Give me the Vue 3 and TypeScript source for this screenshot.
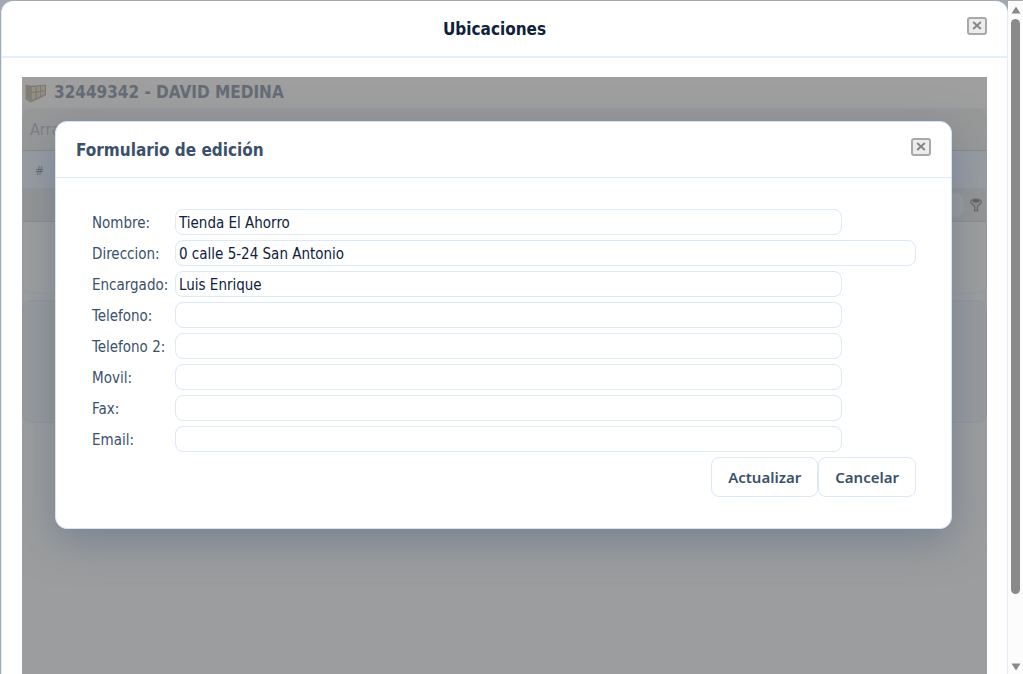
<script setup lang="ts">
import { reactive, ref } from 'vue'

interface Field {
  id: string
  label: string
  value: string
  wide?: boolean
}

const fields = reactive<Field[]>([
  { id: 'nombre', label: 'Nombre:', value: 'Tienda El Ahorro' },
  { id: 'direccion', label: 'Direccion:', value: '0 calle 5-24 San Antonio', wide: true },
  { id: 'encargado', label: 'Encargado:', value: 'Luis Enrique' },
  { id: 'telefono', label: 'Telefono:', value: '' },
  { id: 'telefono2', label: 'Telefono 2:', value: '' },
  { id: 'movil', label: 'Movil:', value: '' },
  { id: 'fax', label: 'Fax:', value: '' },
  { id: 'email', label: 'Email:', value: '' },
])
const filter = ref('')
</script>

<template>
  <div class="page">
    <main class="window">
      <header class="window-head">
        <h1>Ubicaciones</h1>
        <button class="close" type="button" aria-label="Cerrar">
          <svg viewBox="0 0 10 9" width="10" height="9"><path d="M1.2 1 8.8 8M8.8 1 1.2 8" /></svg>
        </button>
      </header>

      <div class="content">
        <section class="client">
          <h2>
            <svg class="boxes" viewBox="0 0 22 20" width="22" height="20">
              <path d="M1 2 10 2.800 20.500 2V12L6 19 1 16Z" fill="#8a877d" />
              <path d="M2 3.500 5 4V8.500L2 8ZM2 9.500 5 10.500V16.500L2 15Z" fill="#7f7c73" />
              <path d="M7 4.200 10.500 3.900V8.600L7 9ZM11.800 3.800 15 3.400V8L11.800 8.500ZM16.200 3.300 19.500 3V7L16.200 7.800ZM7 10.200 10.500 9.800V14.600L7 16.600ZM11.800 9.700 15 9.200V12.500L11.800 14.200ZM16.200 9 19.500 8.200V10.800L16.200 12Z" fill="#949082" />
              <path d="M1 2V16L6 19 20.500 12V2L6 3.600 1 2M6 3.600V19M1 8.500 6 9.600 20 7.600M11.200 3.500V16M15.600 3V14" fill="none" stroke="#7c7a73" />
            </svg>
            <span>32449342 - DAVID MEDINA</span>
          </h2>
          <div class="grid-card">
            <div class="group-hint">Arrastre</div>
            <div class="grid-head">#</div>
            <div class="grid-filter">
              <input v-model="filter" type="text" aria-label="Filtro" />
              <button class="filter" type="button" aria-label="Filtrar">
                <svg viewBox="0 0 12 14" width="12" height="14">
                  <path d="M1 2.500Q6 -.5 11 2.500V5L7.600 8.500V12.800H4.600V8.500L1 5Z" fill="#8b8b8b" stroke="#6c6c6c" stroke-width="1.300" />
                  <ellipse cx="6" cy="3" rx="3.400" ry="1.500" fill="#626262" />
                </svg>
              </button>
            </div>
            <div class="grid-body"></div>
          </div>
          <div class="detail-card"></div>

          <div class="overlay">
            <div class="dialog" role="dialog" aria-labelledby="dialog-title">
              <header class="dialog-head">
                <h3 id="dialog-title">Formulario de edición</h3>
                <button class="close" type="button" aria-label="Cerrar formulario">
                  <svg viewBox="0 0 10 9" width="10" height="9"><path d="M1.2 1 8.8 8M8.8 1 1.2 8" /></svg>
                </button>
              </header>
              <form class="form" @submit.prevent>
                <div v-for="field in fields" :key="field.id" class="row">
                  <label :for="field.id">{{ field.label }}</label>
                  <input :id="field.id" v-model="field.value" type="text" :class="{ wide: field.wide }" />
                </div>
                <div class="actions">
                  <button type="submit">Actualizar</button>
                  <button type="button">Cancelar</button>
                </div>
              </form>
            </div>
          </div>
        </section>
      </div>
    </main>

    <div class="scrollbar" aria-hidden="true">
      <svg viewBox="0 0 10 8" width="10" height="8"><path d="M5 .5 9.5 7.5H.5Z" /></svg>
      <div class="track"><div class="thumb"></div></div>
      <svg viewBox="0 0 10 8" width="10" height="8"><path d="M5 7.5 9.5 .5H.5Z" /></svg>
    </div>
  </div>
</template>

<style>
body {
  margin: 0;
}
</style>

<style scoped>
* {
  box-sizing: border-box;
}
.page {
  display: flex;
  height: 100vh;
  padding: 1px 0 0 1px;
  overflow: hidden;
  background: #a3a9b1;
  font-family: "DejaVu Sans Condensed", "Noto Sans", sans-serif;
  font-size: 15px;
  color: #3a506b;
}
h1,
h2,
h3 {
  margin: 0;
}
.window {
  display: flex;
  flex: 1;
  flex-direction: column;
  min-width: 0;
  border: 1px solid #e3edf8;
  border-width: 0 1px;
  border-radius: 12px 12px 0 0;
  background: #fff;
}
.window-head {
  display: flex;
  align-items: center;
  height: 57px;
  padding: 0 20px;
  border-bottom: 2px solid #e5eff9;
}
.window-head h1 {
  flex: 1;
  font-size: 17px;
  line-height: 24px;
  text-align: center;
  color: #10213c;
}
.close {
  display: flex;
  align-items: center;
  justify-content: center;
  width: 20px;
  height: 18px;
  padding: 0;
  border: 2px solid #a9a9a9;
  border-radius: 3px;
  background: #ececec;
}
.close path {
  fill: none;
  stroke: #858585;
  stroke-width: 2;
}
.window-head .close,
.dialog-head .close {
  margin-bottom: 6px;
}
.content {
  display: flex;
  flex: 1;
  min-height: 0;
  padding: 19px 20px 0;
}
.client {
  position: relative;
  flex: 1;
  overflow: hidden;
  background: #9c9d9e;
}
.client h2 {
  display: flex;
  gap: 7px;
  align-items: center;
  height: 31px;
  padding: 0 3px;
  background: #9f9f9f;
  font-size: 17px;
  line-height: 24px;
  color: #656c75;
}
.client h2 span {
  padding-bottom: 2px;
}
.grid-card {
  overflow: hidden;
  border: 1px solid #959ba2;
  border-radius: 10px;
  background: #9e9e9e;
}
.group-hint {
  height: 42px;
  padding: 0 7px;
  border-bottom: 1px solid #858a90;
  background: #989898;
  font-size: 16px;
  line-height: 42px;
  color: #7c7f83;
}
.grid-head {
  height: 38px;
  padding: 0 12px;
  border-bottom: 1px solid #9198a2;
  background: #989ca2;
  font-size: 12px;
  line-height: 40px;
  color: #62666c;
}
.grid-filter {
  display: flex;
  gap: 6px;
  align-items: center;
  justify-content: flex-end;
  height: 33px;
  padding: 0 4px;
  border-bottom: 1px solid #898c90;
  background: #959595;
}
.grid-filter input {
  width: 120px;
  height: 24px;
  border: 1px solid #959ca3;
  border-radius: 8px;
  background: #9d9d9d;
}
.filter {
  display: flex;
  padding: 0;
  border: 0;
  background: none;
}
.grid-body {
  height: 70px;
}
.detail-card {
  height: 123px;
  margin-top: 7px;
  border: 1px solid #9197a0;
  border-radius: 10px;
  background: #989a9d;
}
.overlay {
  position: absolute;
  inset: 0;
  padding: 44px 35px 0 33px;
}
.dialog {
  border: 1px solid #d5e4f5;
  border-radius: 12px;
  background: #fff;
  box-shadow: 0 12px 40px rgba(84, 103, 132, 0.5);
}
.dialog-head {
  display: flex;
  align-items: center;
  justify-content: space-between;
  height: 56px;
  padding: 0 20px;
  border-bottom: 1px solid #dfeaf7;
}
.dialog-head h3 {
  font-size: 17px;
  line-height: 24px;
}
.form {
  display: flex;
  flex-direction: column;
  gap: 5px;
  padding: 31px 35px 31px 36px;
}
.row {
  display: grid;
  grid-template-columns: 83px 1fr;
  align-items: center;
}
.row label {
  padding-top: 2px;
  white-space: nowrap;
}
.row input {
  width: 90%;
  height: 26px;
  padding: 2px 3px 0;
  border: 1px solid #dce8f6;
  border-radius: 8px;
  background: #fff;
  font: inherit;
  color: #10213c;
}
.row input.wide {
  width: 100%;
}
.actions {
  display: flex;
  justify-content: flex-end;
}
.actions button {
  height: 40px;
  padding: 0 16px;
  border: 1px solid #dce8f6;
  border-radius: 8px;
  background: #fff;
  font: 600 15px/24px "Noto Sans", "Open Sans", sans-serif;
  color: #3a506b;
}
.scrollbar {
  display: flex;
  flex-direction: column;
  gap: 5px;
  align-items: center;
  width: 15px;
  padding: 5px 0 3px;
  background: #fcfcfc;
}
.scrollbar path {
  fill: #8a8a8a;
}
.track {
  flex: 1;
}
.thumb {
  width: 9px;
  height: 90%;
  border-radius: 5px;
  background: #8a8a8a;
}
</style>
